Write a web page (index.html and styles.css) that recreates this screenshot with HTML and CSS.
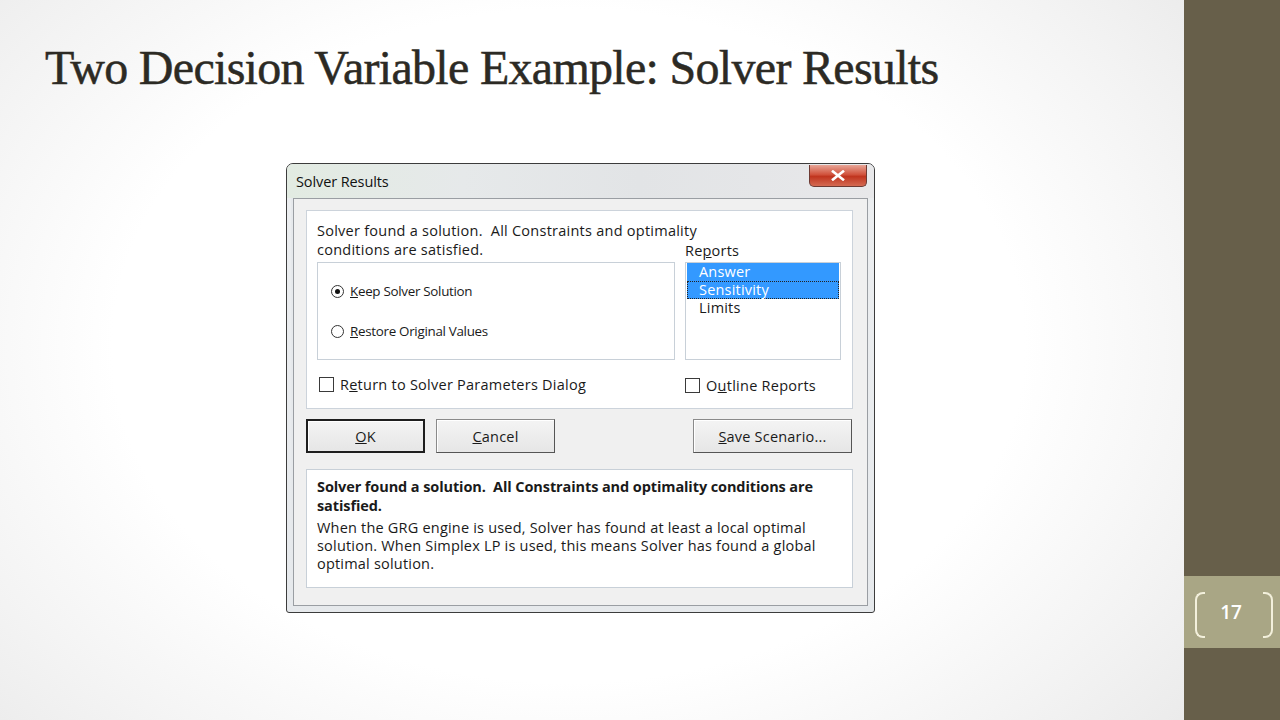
FILE: index.html
```html
<!DOCTYPE html>
<html>
<head lang="en">
    <meta charset="UTF-8">
    <title>Solver Results</title>
    <link rel="stylesheet" href="styles.css">
</head>
<body>
<div class="slide">
    <div class="main">
        <h1 class="title">Two Decision Variable Example: Solver Results</h1>

        <div class="dialog">
            <div class="titlebar">
                <span class="caption">Solver Results</span>
                <span class="close">
                    <svg width="14" height="11" viewBox="0 0 14 11"><path d="M2 1.5 L12 9.5 M12 1.5 L2 9.5" stroke="#fff" stroke-width="2.6" stroke-linecap="square"/></svg>
                </span>
            </div>
            <div class="body">
                <div class="group">
                    <div class="msg">Solver found a solution.&nbsp; All Constraints and optimality<br>conditions are satisfied.</div>
                    <div class="reports-label">Re<u>p</u>orts</div>
                    <div class="row">
                        <div class="choices">
                            <label class="radio"><span class="dot on"></span><u>K</u>eep Solver Solution</label>
                            <label class="radio"><span class="dot"></span><u>R</u>estore Original Values</label>
                        </div>
                        <ul class="list">
                            <li class="sel">Answer</li>
                            <li class="sel focus">Sensitivity</li>
                            <li>Limits</li>
                        </ul>
                    </div>
                    <div class="checks">
                        <label class="check"><span class="box"></span>R<u>e</u>turn to Solver Parameters Dialog</label>
                        <label class="check right"><span class="box"></span>O<u>u</u>tline Reports</label>
                    </div>
                </div>

                <div class="buttons">
                    <span class="btn default"><u>O</u>K</span>
                    <span class="btn"><u>C</u>ancel</span>
                    <span class="btn wide"><u>S</u>ave Scenario...</span>
                </div>

                <div class="info">
                    <p class="bold">Solver found a solution.&nbsp; All Constraints and optimality conditions are satisfied.</p>
                    <p>When the GRG engine is used, Solver has found at least a local optimal solution. When Simplex LP is used, this means Solver has found a global optimal solution.</p>
                </div>
            </div>
        </div>
    </div>

    <div class="sidebar">
        <div class="page-no">
            <span class="num">17</span>
        </div>
    </div>
</div>
</body>
</html>
```

FILE: styles.css
```css
* {
    padding: 0;
    margin: 0;
    list-style: none;
    box-sizing: border-box;
}

body {
    width: 1280px;
    height: 720px;
    overflow: hidden;
}

.slide {
    display: flex;
    width: 1280px;
    height: 720px;
}

.main {
    width: 1184px;
    height: 720px;
    background: radial-gradient(ellipse 70% 85% at 48% 48%, #ffffff 55%, #f3f3f3 80%, #e9e9e9 100%);
}

.title {
    font-family: "Liberation Serif", serif;
    font-weight: normal;
    font-size: 48px;
    color: #2c2a24;
    letter-spacing: -0.7px;
    -webkit-text-stroke: 0.5px #2c2a24;
    padding: 40px 0 0 45px;
    height: 163px;
    line-height: 56px;
}

/* ---------- dialog ---------- */
.dialog {
    margin-left: 286px;
    width: 589px;
    height: 450px;
    border: 1px solid #3c3c3c;
    border-radius: 7px 7px 3px 3px;
    background: linear-gradient(#dfe3e6, #eceef0 40px, #e6e9ec);
    display: flex;
    flex-direction: column;
    font-family: "Open Sans", "Noto Sans", sans-serif;
    color: #1a1a1a;
}

.titlebar {
    height: 34px;
    display: flex;
    justify-content: space-between;
    align-items: flex-start;
    padding: 0 7px 0 9px;
    background: linear-gradient(90deg, #e2ebe2 0, #e6e9ea 30%, #e2e4e6 60%, #e8e8ea 100%);
    border-radius: 6px 6px 0 0;
}

.caption {
    font-size: 14.5px;
    margin-top: 8px;
    color: #111;
    letter-spacing: -0.1px;
}

.close {
    width: 58px;
    height: 22px;
    margin-top: 1px;
    border: 1px solid #6d3a33;
    border-top: 0;
    border-radius: 0 0 5px 5px;
    background: linear-gradient(#e8a597, #d1533d 45%, #c0351f 55%, #d46a52);
    display: flex;
    align-items: center;
    justify-content: center;
}

.body {
    flex: 1;
    margin: 0 6px 6px;
    background: #f0f0f0;
    border: 1px solid #9a9ea3;
    box-shadow: -2px 0 0 #e6e9ec;
    padding: 11px 14px 0 12px;
    display: flex;
    flex-direction: column;
}

.group {
    height: 199px;
    background: #fff;
    border: 1px solid #ccd3db;
    padding: 10px 10px 0 10px;
    position: relative;
}

.msg {
    font-size: 14.5px;
    line-height: 19px;
    letter-spacing: 0.25px;
}

.reports-label {
    position: absolute;
    left: 378px;
    top: 30px;
    font-size: 14.5px;
    letter-spacing: 0.2px;
}

.row {
    display: flex;
    gap: 10px;
    margin-top: 3px;
}

.choices {
    width: 358px;
    height: 98px;
    border: 1px solid #c8d0d8;
    padding: 19px 0 0 13px;
    display: flex;
    flex-direction: column;
    gap: 22px;
}

.radio {
    display: flex;
    align-items: center;
    font-size: 13.4px;
    letter-spacing: -0.3px;
    height: 18px;
}

.dot {
    width: 13px;
    height: 13px;
    border: 1.5px solid #333;
    border-radius: 50%;
    margin-right: 6px;
    display: flex;
    align-items: center;
    justify-content: center;
}

.dot.on::after {
    content: "";
    width: 5px;
    height: 5px;
    border-radius: 50%;
    background: #111;
}

.list {
    width: 156px;
    height: 98px;
    border: 1px solid #c8d0d8;
    padding: 0 1px;
}

.list li {
    height: 18px;
    line-height: 18px;
    font-size: 14.5px;
    padding-left: 12px;
    letter-spacing: 0.2px;
}

.list li.sel {
    background: #3399ff;
    color: #fff;
}

.list li.focus {
    border: 1px dotted #222;
    line-height: 16px;
    padding-left: 11px;
}

.check {
    display: flex;
    align-items: center;
    font-size: 14.5px;
    letter-spacing: 0.25px;
}

.checks {
    display: flex;
    justify-content: space-between;
    margin-top: 14px;
    padding-right: 26px;
    padding-left: 2px;
}

.check.right {
    margin-top: 2px;
}

.box {
    width: 15px;
    height: 15px;
    border: 1.5px solid #3a3a3a;
    margin-right: 6px;
    background: #fff;
}

/* ---------- buttons ---------- */
.buttons {
    display: flex;
    gap: 11px;
    margin-top: 10px;
}

.btn {
    width: 119px;
    height: 34px;
    border: 1px solid #8a8a8a;
    border-right-color: #555;
    border-bottom-color: #555;
    background: linear-gradient(#f4f4f4, #e6e6e6);
    box-shadow: inset 1px 1px 0 #fff;
    font-size: 14.5px;
    letter-spacing: 0.2px;
    display: flex;
    align-items: center;
    justify-content: center;
}

.btn.default {
    border: 2px solid #1e1e1e;
}

.btn.wide {
    width: 159px;
    margin-left: auto;
    margin-right: 1px;
}

/* ---------- info ---------- */
.info {
    margin-top: 16px;
    height: 119px;
    background: #fff;
    border: 1px solid #c8d0d8;
    padding: 7px 28px 0 10px;
    font-size: 14.5px;
    letter-spacing: 0.2px;
}

.info p {
    line-height: 18px;
}

.info p.bold {
    font-weight: bold;
    line-height: 19px;
    margin-bottom: 4px;
    letter-spacing: -0.1px;
}

/* ---------- sidebar ---------- */
.sidebar {
    width: 96px;
    height: 720px;
    background: #675f4a;
    padding-top: 576px;
}

.page-no {
    height: 72px;
    background: #a9a685;
    display: flex;
    align-items: center;
    justify-content: center;
    position: relative;
}

.page-no::before,
.page-no::after {
    content: "";
    position: absolute;
    top: 16px;
    width: 8px;
    height: 42px;
    border: 2px solid #f3f0dc;
    border-radius: 8px;
}

.page-no::before {
    left: 11px;
    border-right: 0;
    border-top-right-radius: 0;
    border-bottom-right-radius: 0;
}

.page-no::after {
    right: 7px;
    border-left: 0;
    border-top-left-radius: 0;
    border-bottom-left-radius: 0;
}

.num {
    font-family: "Open Sans", sans-serif;
    font-size: 19px;
    font-weight: 600;
    color: #fff;
    margin-left: -2px;
    margin-top: -1px;
}
```
